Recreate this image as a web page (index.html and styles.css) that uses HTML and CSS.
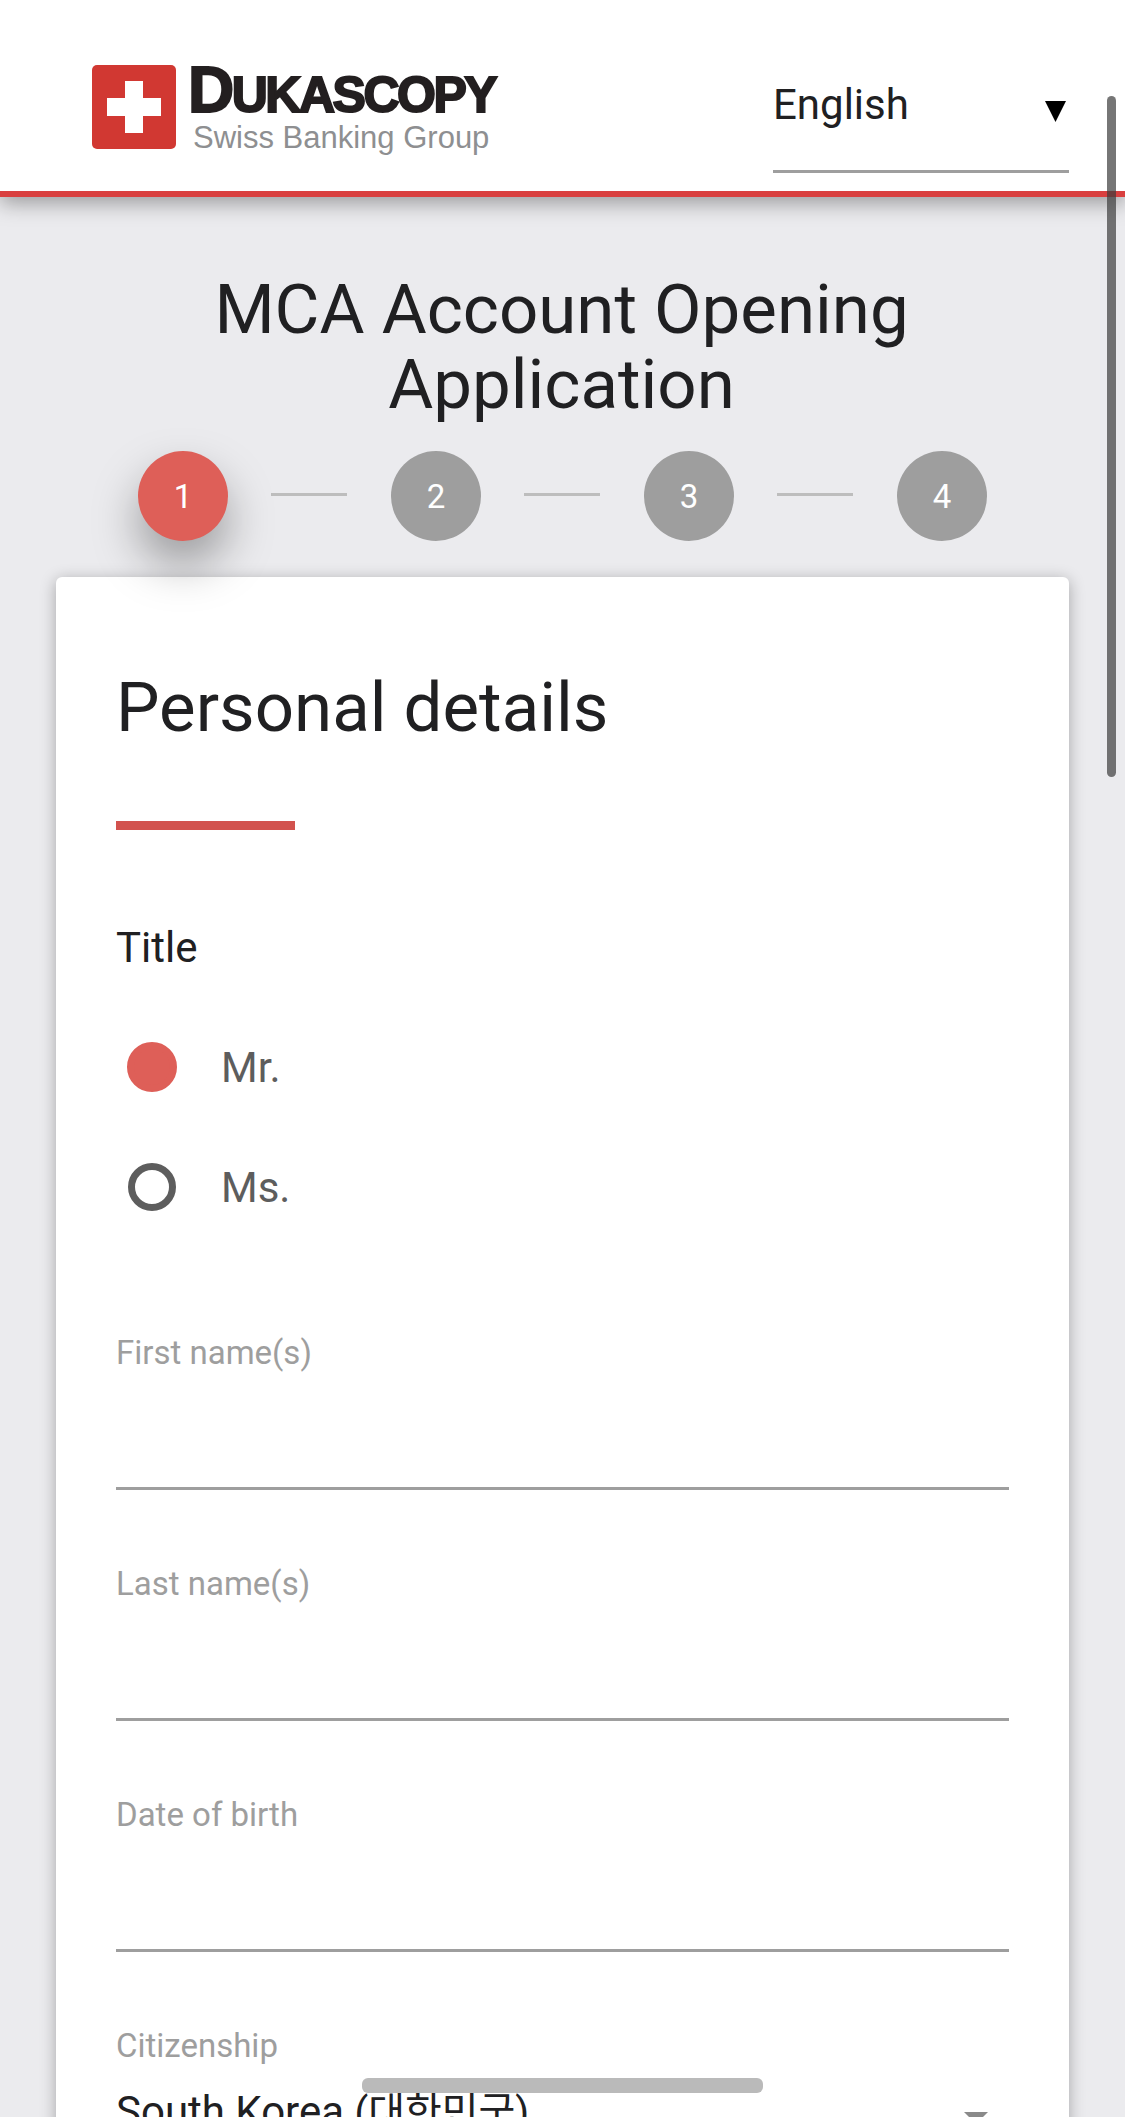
FILE: index.html
```html
<!DOCTYPE html>
<html lang="en">
<head>
    <meta charset="UTF-8">
    <meta name="viewport" content="width=device-width, initial-scale=1.0">
    <title>MCA Account Opening Application</title>
    <link rel="stylesheet" href="styles.css">
</head>
<body>
    <header class="topbar">
        <div class="logo">
            <svg class="logo-mark" viewBox="0 0 84 84" width="84" height="84">
                <rect width="84" height="84" rx="5" fill="#d13832"/>
                <path d="M33 16h18v17h18v18H51v17H33V51H15V33h18z" fill="#fff"/>
            </svg>
            <div class="logo-text">
                <div class="logo-name"><span class="logo-initial">D</span>UKASCOPY</div>
                <div class="logo-sub">Swiss Banking Group</div>
            </div>
        </div>
        <div class="lang">
            <span>English</span>
            <svg class="lang-arrow" viewBox="0 0 21 21" width="21" height="21"><path d="M0 0h21L10.500 21z"/></svg>
        </div>
    </header>

    <main class="page">
        <h1 class="page-title">MCA Account Opening<br>Application</h1>

        <div class="steps">
            <div class="step step-active">1</div>
            <div class="step-line"></div>
            <div class="step">2</div>
            <div class="step-line"></div>
            <div class="step">3</div>
            <div class="step-line"></div>
            <div class="step">4</div>
        </div>

        <section class="card">
            <h2 class="card-title">Personal details</h2>
            <div class="card-rule"></div>

            <div class="group-label">Title</div>
            <div class="radio-group">
                <div class="radio">
                    <span class="radio-mark radio-on"></span>
                    <span>Mr.</span>
                </div>
                <div class="radio">
                    <span class="radio-mark"></span>
                    <span>Ms.</span>
                </div>
            </div>

            <label class="field">
                <span class="field-label">First name(s)</span>
                <input class="field-input" type="text">
            </label>
            <label class="field">
                <span class="field-label">Last name(s)</span>
                <input class="field-input" type="text">
            </label>
            <label class="field">
                <span class="field-label">Date of birth</span>
                <input class="field-input" type="text">
            </label>
            <div class="field">
                <span class="field-label">Citizenship</span>
                <div class="field-select">
                    <span>South Korea <span class="native-name">(대한민국)</span></span>
                    <svg class="select-arrow" viewBox="0 0 24 12" width="24" height="12"><path d="M0 0h24L12 12z"/></svg>
                </div>
            </div>
        </section>
    </main>

    <div class="scrollbar"></div>
    <div class="home-pill"></div>
</body>
</html>
```

FILE: styles.css
```css
html, body {
    height: 2117px;
    overflow: hidden;
}
body {
    margin: 0;
    background-color: #ebebee;
    color: #202022;
    font-family: Roboto, "Noto Sans CJK KR", sans-serif;
}
.topbar {
    position: relative;
    z-index: 1;
    height: 191px;
    padding: 0 56px 0 92px;
    display: flex;
    justify-content: space-between;
    background: #fff;
    border-bottom: 6px solid #d93f3f;
    box-shadow: 0 6px 20px rgba(0, 0, 0, 0.35);
}
.logo {
    display: flex;
    margin-top: 65px;
    height: 90px;
}
.logo-mark {
    display: block;
}
.logo-text {
    margin-left: 12px;
    font-family: "Liberation Sans", Arial, sans-serif;
}
.logo-name {
    height: 52px;
    margin-top: -1px;
    font-size: 50px;
    line-height: 52px;
    font-weight: 700;
    letter-spacing: -2.500px;
    color: #231f20;
    -webkit-text-stroke: 2px #231f20;
    white-space: nowrap;
}
.logo-initial {
    font-size: 64px;
}
.logo-sub {
    margin: 4px 0 0 5px;
    font-size: 31px;
    line-height: 36px;
    color: #8e8f91;
    white-space: nowrap;
}
.lang {
    width: 296px;
    height: 90px;
    margin-top: 62px;
    padding-top: 18px;
    display: flex;
    justify-content: space-between;
    border-bottom: 3px solid #9e9e9e;
    font-size: 42px;
    line-height: 50px;
}
.lang-arrow {
    margin: 21px 3px 0 0;
}
.page {
    padding: 75px 56px 0;
}
.page-title {
    margin: 0;
    padding-right: 2px;
    font-size: 69px;
    line-height: 75px;
    font-weight: 400;
    text-align: center;
}
.steps {
    margin-top: 29px;
    padding-left: 82px;
    display: flex;
    align-items: center;
}
.step {
    width: 90px;
    height: 90px;
    flex: none;
    border-radius: 50%;
    background: #9e9e9e;
    color: #fff;
    font-size: 33px;
    line-height: 92px;
    text-align: center;
}
.step-active {
    position: relative;
    z-index: 1;
    background: #de5f58;
    box-shadow: 0 24px 46px rgba(0, 0, 0, 0.34);
}
.step-line {
    width: 76px;
    height: 3px;
    margin: -4px 44px 0 43px;
    background: #bdbdbd;
}
.card {
    position: relative;
    margin-top: 36px;
    padding: 91px 60px 0;
    height: 1600px;
    background: #fff;
    border-radius: 6px;
    box-shadow: 0 3px 16px rgba(0, 0, 0, 0.3);
}
.card-title {
    margin: 0;
    font-size: 69px;
    line-height: 80px;
    font-weight: 400;
}
.card-rule {
    width: 179px;
    height: 9px;
    margin-top: 73px;
    background: #d2524e;
}
.group-label {
    margin-top: 93px;
    font-size: 42px;
    line-height: 50px;
}
.radio-group {
    margin: 34px 0 86px;
}
.radio {
    height: 120px;
    display: flex;
    align-items: center;
    gap: 45px;
    padding-left: 12px;
    font-size: 42px;
    color: #5d5d5d;
}
.radio-mark {
    width: 48px;
    height: 48px;
    flex: none;
    box-sizing: border-box;
    border: 7px solid #5d5d5d;
    border-radius: 50%;
}
.radio-on {
    width: 50px;
    height: 50px;
    margin: 0 -1px;
    background: #de5f58;
    border-color: #de5f58;
}
.field {
    display: block;
    height: 231px;
}
.field-label {
    display: block;
    font-size: 33px;
    line-height: 40px;
    color: #9e9e9e;
}
.field-input {
    display: block;
    width: 100%;
    height: 117px;
    box-sizing: border-box;
    border: none;
    border-bottom: 3px solid #9e9e9e;
    outline: none;
    background: transparent;
    font: inherit;
}
.field-select {
    position: relative;
    margin-top: 21px;
    font-size: 42px;
    line-height: 50px;
}
.native-name {
    font-size: 40px;
}
.select-arrow {
    position: absolute;
    top: 25px;
    right: 21px;
    fill: #8a8a8a;
}
.scrollbar {
    position: fixed;
    top: 96px;
    left: 1107px;
    width: 9px;
    height: 681px;
    border-radius: 5px;
    background: rgba(60, 60, 60, 0.7);
    z-index: 2;
}
.home-pill {
    position: fixed;
    top: 2078px;
    left: 362px;
    width: 401px;
    height: 15px;
    border-radius: 6px;
    background: #bababa;
    z-index: 2;
}
```
